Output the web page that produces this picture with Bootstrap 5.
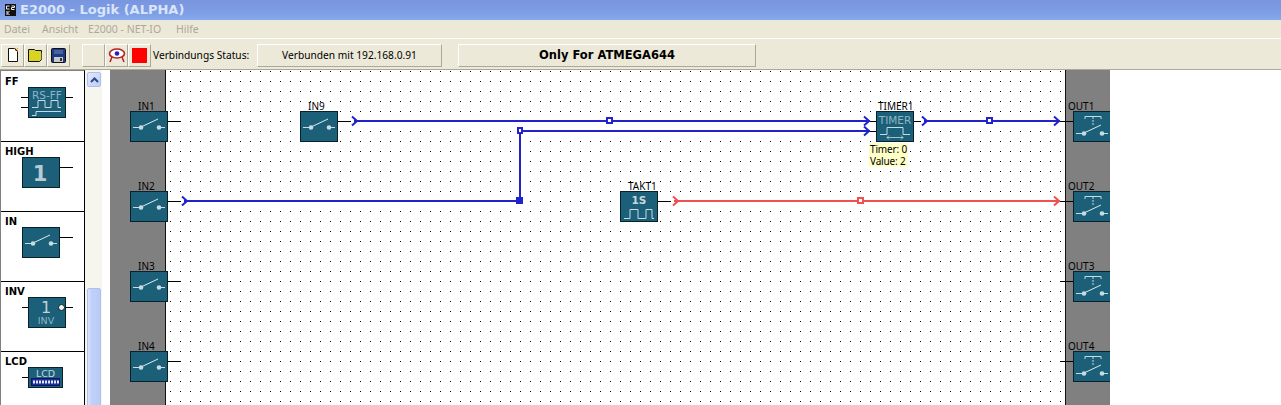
<!DOCTYPE html>
<html lang="de">
<head>
<meta charset="utf-8">
<title>E2000 - Logik (ALPHA)</title>
<link href="https://cdn.jsdelivr.net/npm/bootstrap@5.3.0/dist/css/bootstrap.min.css" rel="stylesheet">
<style>
html,body{height:405px;overflow:hidden;background:#fff}
body{font-family:"Noto Sans","DejaVu Sans",sans-serif;font-size:10.2px;color:#000;line-height:12px}
.win-title{height:20px;padding-left:5px;gap:4px;background:linear-gradient(#7a95df,#7d9de4 60%,#86a9ec);color:#d9e5fa;font-weight:700;font-size:13px;font-family:"DejaVu Sans",sans-serif}
.win-menu{height:19px;background:#ece9d8;padding-left:4px;color:#aca899;font-size:10.5px;border-bottom:1px solid #fff}
.mi-a{width:38px}.mi-b{width:46px}.mi-c{width:88px}
.win-tools{height:31px;background:#ece9d8;padding:5px 0 3px 1px;border-bottom:1px solid #aca899}
.tool{width:23px;height:23px;padding:0;border-radius:0;background:#ece9d8;border:1px solid;border-color:#fff #aca899 #aca899 #fff;display:flex;align-items:center;justify-content:center;--bs-btn-hover-bg:#ece9d8}
.tool-gap{margin-left:12px}
.status-lbl{margin:0 7px 0 2px;width:97px;white-space:nowrap}
.status-box{height:23px;border:1px solid;border-color:#fff #aca899 #aca899 #fff;justify-content:center;white-space:nowrap}
.status-a{width:185px;margin-right:16px}
.status-b{width:298px;font-weight:700;font-size:11.5px;font-family:"DejaVu Sans",sans-serif}
.work{height:335px}
.palette{width:85px;flex:none;border-left:1px solid #808080;border-top:1px solid #808080;border-right:1px solid #000;padding-top:1px;overflow:hidden}
.pal-item{height:70px;border-bottom:1px solid #000;background:#fff}
.pal-name{display:block;height:15px;padding:4px 0 0 4px;font-weight:700;font-size:10px;line-height:11px;font-family:"DejaVu Sans",sans-serif}
.pal-item svg{display:block}
.scroll-rail{width:17px;flex:none;background:#f6f5ee;padding:2px 1px 0 2px}
.scroll-up{height:15px;background:linear-gradient(135deg,#e2e9fd,#bccdf6);border:1px solid #aebff0;border-radius:2px}
.scroll-thumb{margin-top:201px;height:120px;background:linear-gradient(90deg,#dbe4fc,#c0d0f9 30%,#b9cbf7);border:1px solid #aebff0;border-radius:2px}
.sheet-gap{width:8px;flex:none}
.sheet{position:relative;width:1000px;height:335px;flex:none;overflow:hidden}
.rail-l{width:56px;background:#808080;border-right:1px solid #111}
.rail-m{flex:1;background:#fff}
.rail-r{width:45px;background:#808080;border-left:1px solid #111}
.wires{position:absolute;left:0;top:0}
.blk{position:absolute;width:38px;height:31px}
.blk svg{display:block}
.blk-name{position:absolute;bottom:31px;white-space:nowrap;line-height:10px;font-size:10px}
.name-in{left:8px}
.name-out{left:-5px}
.name-mid{left:2px}
.tip{position:absolute;left:759px;top:73px;width:39px;height:24px;background:#ffffc8;padding-left:1px;white-space:nowrap;line-height:12px;font-size:10px;letter-spacing:-.15px}
.nodetext{fill:#8fb6c4;font-family:"DejaVu Sans",sans-serif}
</style>
</head>
<body>
<svg width="0" height="0" class="position-absolute">
<defs>
<symbol id="sw-in" viewBox="0 0 38 31">
<rect x=".5" y=".5" width="37" height="30" fill="#1b5f79" stroke="#07222c"/>
<path d="M3 16.500h7M29 16.500h6" stroke="#c9dbe2"/>
<path d="M11 16l17-8" stroke="#dfeaee"/>
<circle cx="11" cy="16.500" r="2.300" fill="#c9dbe2"/><circle cx="29" cy="16.500" r="2.300" fill="#c9dbe2"/>
</symbol>
<symbol id="sw-out" viewBox="0 0 38 31">
<rect x=".5" y=".5" width="37" height="30" fill="#1b5f79" stroke="#07222c"/>
<path d="M12 8V5.500h16V8" fill="none" stroke="#c9dbe2"/>
<path d="M20 6v9" stroke="#c9dbe2" stroke-dasharray="2 1"/>
<path d="M3 22.500h7M29 22.500h6" stroke="#c9dbe2"/>
<path d="M11 22l17-8" stroke="#dfeaee"/>
<circle cx="11" cy="22.500" r="2.300" fill="#c9dbe2"/><circle cx="29" cy="22.500" r="2.300" fill="#c9dbe2"/>
</symbol>
<symbol id="timer" viewBox="0 0 38 31">
<rect x=".5" y=".5" width="37" height="30" fill="#1b5f79" stroke="#07222c"/>
<text x="19" y="13" text-anchor="middle" font-size="10.500" class="nodetext">TIMER</text>
<path d="M4 23.500h7V16.500h16V23.500h7" fill="none" stroke="#c9dbe2"/>
<path d="M11 26.500h16M13 24.500l-2 2 2 2M25 24.500l2 2-2 2" fill="none" stroke="#c9dbe2" stroke-width=".8"/>
</symbol>
<symbol id="takt" viewBox="0 0 38 31">
<rect x=".5" y=".5" width="37" height="30" fill="#1b5f79" stroke="#07222c"/>
<text x="19" y="13" text-anchor="middle" font-size="10.500" font-weight="700" fill="#c6d7de" font-family="DejaVu Sans,sans-serif">1S</text>
<path d="M4 27.500h6V18.500h8V27.500h8V18.500h6V27.500h2" fill="none" stroke="#c9dbe2"/>
</symbol>
</defs>
</svg>

<div class="d-flex align-items-center win-title">
<svg width="11" height="12" viewBox="0 0 11 12" aria-hidden="true"><rect width="11" height="12" fill="#111"/><path d="M1.500 2h3M1.500 2v3h3M6.500 2h3v1.500h-3v2h3M2 7v4M4.500 7l-2 2 2 2" fill="none" stroke="#eee" stroke-width="1"/></svg>
<span>E2000 - Logik (ALPHA)</span>
</div>

<div class="d-flex align-items-center win-menu">
<span class="mi-a">Datei</span><span class="mi-b">Ansicht</span><span class="mi-c">E2000 - NET-IO</span><span>Hilfe</span>
</div>

<div class="d-flex align-items-center win-tools">
<button class="btn tool" type="button" aria-label="Neu"><svg width="14" height="16" viewBox="0 0 14 16"><path d="M2.500 1.500h6l3 3v10h-9z" fill="#fff" stroke="#111"/><path d="M9 1l3 3M12 1l-3 3" stroke="#e8902a"/></svg></button>
<button class="btn tool" type="button" aria-label="Öffnen"><svg width="17" height="15" viewBox="0 0 17 15"><path d="M1.500 1.500h6l1 1h6v9l-2 2h-11z" fill="#d9d321" stroke="#111"/><path d="M14.500 4.500v7" stroke="#555"/></svg></button>
<button class="btn tool" type="button" aria-label="Speichern"><svg width="15" height="15" viewBox="0 0 15 15"><rect x=".5" y=".5" width="14" height="14" rx="1" fill="#1d3b7e" stroke="#111"/><path d="M3 3h9M3 5h9" stroke="#6f8bc9"/><rect x="3" y="9" width="9" height="5" fill="#c9c9c9"/><rect x="9" y="10" width="2" height="3" fill="#333"/></svg></button>
<button class="btn tool tool-gap" type="button" aria-label="Leer"></button>
<button class="btn tool" type="button" aria-label="Ansicht"><svg width="18" height="16" viewBox="0 0 18 16"><ellipse cx="9" cy="6.500" rx="7.500" ry="4.500" fill="#fff" stroke="#b52020" stroke-width="1.600"/><circle cx="9" cy="6.500" r="2.300" fill="#2020c8"/><path d="M4 10l-2 5M14 10l2 5" stroke="#b52020" stroke-width="1.500"/></svg></button>
<button class="btn tool" type="button" aria-label="Stopp"><svg width="15" height="15" viewBox="0 0 15 15"><rect width="15" height="15" fill="#f00"/></svg></button>
<span class="status-lbl">Verbindungs Status:</span>
<div class="d-flex align-items-center status-box status-a">Verbunden mit 192.168.0.91</div>
<div class="d-flex align-items-center status-box status-b">Only For ATMEGA644</div>
</div>

<div class="d-flex work">
<div class="palette">
<div class="pal-item"><span class="pal-name">FF</span>
<svg width="84" height="40" viewBox="0 0 84 40"><path d="M20 10.500h7M20 20.500h7M65 10.500h7" stroke="#000"/><rect x="27.500" y=".5" width="37" height="30" fill="#1b5f79" stroke="#07222c"/><text x="46" y="12" text-anchor="middle" font-size="10.500" class="nodetext">RS-FF</text><path d="M31 20.500h6v-7h7v7h6v-7h7v7h3" fill="none" stroke="#c9dbe2"/><path d="M31 28.500h4v-4h25" fill="none" stroke="#c9dbe2"/></svg></div>
<div class="pal-item"><span class="pal-name">HIGH</span>
<svg width="84" height="40" viewBox="0 0 84 40"><path d="M59 10.500h13" stroke="#000"/><rect x="21.500" y=".5" width="37" height="30" fill="#1b5f79" stroke="#07222c"/><text x="39" y="24" text-anchor="middle" font-size="21" font-weight="700" fill="#b8cbd3" font-family="DejaVu Sans,sans-serif">1</text></svg></div>
<div class="pal-item"><span class="pal-name">IN</span>
<svg width="84" height="40" viewBox="0 0 84 40"><path d="M59 10.500h13" stroke="#000"/><use href="#sw-in" x="21" y="0" width="38" height="31"/></svg></div>
<div class="pal-item"><span class="pal-name">INV</span>
<svg width="84" height="40" viewBox="0 0 84 40"><path d="M21 10.500h6M65 10.500h7" stroke="#000"/><rect x="27.500" y=".5" width="37" height="30" fill="#1b5f79" stroke="#07222c"/><text x="45" y="16" text-anchor="middle" font-size="16" fill="#c0d3da" font-family="DejaVu Sans,sans-serif">1</text><text x="45" y="27" text-anchor="middle" font-size="9.500" class="nodetext">INV</text><circle cx="60.500" cy="10.500" r="3" fill="#f2f2f2" stroke="#07222c"/></svg></div>
<div class="pal-item"><span class="pal-name">LCD</span>
<svg width="84" height="40" viewBox="0 0 84 40"><path d="M21 10.500h6" stroke="#000"/><rect x="27.500" y=".5" width="34" height="20" fill="#1b5f79" stroke="#07222c"/><text x="44.500" y="10" text-anchor="middle" font-size="9.500" fill="#c6d7de" font-family="DejaVu Sans,sans-serif">LCD</text><rect x="30.500" y="11.500" width="28" height="7" fill="#1c2f96" stroke="#0b1560"/><path d="M32 15h26" stroke="#dfe4ff" stroke-width="3" stroke-dasharray="2 1"/></svg></div>
</div>
<div class="scroll-rail">
<div class="scroll-up d-flex align-items-center justify-content-center"><svg width="9" height="6" viewBox="0 0 9 6"><path d="M1 5l3.500-3.500L8 5" fill="none" stroke="#2b4a86" stroke-width="2"/></svg></div>
<div class="scroll-thumb"></div>
</div>
<div class="sheet-gap"></div>
<div class="sheet">
<div class="d-flex h-100"><div class="rail-l"></div><div class="rail-m"></div><div class="rail-r"></div></div>
<svg class="wires" width="1000" height="335" viewBox="0 0 1000 335">
<defs><pattern id="dots" width="10" height="10" patternUnits="userSpaceOnUse"><rect x="0" y="1" width="1" height="1" fill="#000"/></pattern></defs>
<rect x="56" y="0" width="899" height="335" fill="url(#dots)"/>
<g stroke="#000" fill="none">
<path d="M58 51.500h13M58 131.500h13M58 211.500h13M58 291.500h13"/>
<path d="M228 51.500h13M548 131.500h13M804 51.500h7M760 51.500h6M760 61.500h6"/>
<path d="M950 51.500h13M950 131.500h13M950 211.500h13M950 291.500h13"/>
</g>
<g stroke="#2222cc" stroke-width="2" fill="none">
<path d="M244 51h516M410 61h350M410 61v70M74 131h336M814 51h136"/>
<path d="M242 46.500l5 4.500-5 4.500M754 46.500l5 4.500-5 4.500M754 56.500l5 4.500-5 4.500M812 46.500l5 4.500-5 4.500M944 46.500l5 4.500-5 4.500M72 126.500l5 4.500-5 4.500"/>
<rect x="497" y="48" width="5" height="5" fill="#fff"/>
<rect x="408" y="58" width="4" height="5" fill="#fff"/>
<rect x="407" y="128" width="5" height="5" fill="#2222cc"/>
<rect x="877" y="48" width="5" height="5" fill="#fff"/>
</g>
<g stroke="#f05050" stroke-width="2" fill="none">
<path d="M564 131h386"/>
<path d="M563 126.500l5 4.500-5 4.500M944 126.500l5 4.500-5 4.500"/>
<rect x="748" y="128" width="5" height="5" fill="#fff"/>
</g>
</svg>
<div class="blk" style="left:20px;top:41px"><span class="blk-name name-in">IN1</span><svg width="38" height="31"><use href="#sw-in"/></svg></div>
<div class="blk" style="left:20px;top:121px"><span class="blk-name name-in">IN2</span><svg width="38" height="31"><use href="#sw-in"/></svg></div>
<div class="blk" style="left:20px;top:201px"><span class="blk-name name-in">IN3</span><svg width="38" height="31"><use href="#sw-in"/></svg></div>
<div class="blk" style="left:20px;top:281px"><span class="blk-name name-in">IN4</span><svg width="38" height="31"><use href="#sw-in"/></svg></div>
<div class="blk" style="left:190px;top:41px"><span class="blk-name name-in">IN9</span><svg width="38" height="31"><use href="#sw-in"/></svg></div>
<div class="blk" style="left:510px;top:121px"><span class="blk-name name-in">TAKT1</span><svg width="38" height="31"><use href="#takt"/></svg></div>
<div class="blk" style="left:766px;top:41px"><span class="blk-name name-mid">TIMER1</span><svg width="38" height="31"><use href="#timer"/></svg></div>
<div class="tip">Timer: 0<br>Value: 2</div>
<div class="blk" style="left:963px;top:41px"><span class="blk-name name-out">OUT1</span><svg width="38" height="31"><use href="#sw-out"/></svg></div>
<div class="blk" style="left:963px;top:121px"><span class="blk-name name-out">OUT2</span><svg width="38" height="31"><use href="#sw-out"/></svg></div>
<div class="blk" style="left:963px;top:201px"><span class="blk-name name-out">OUT3</span><svg width="38" height="31"><use href="#sw-out"/></svg></div>
<div class="blk" style="left:963px;top:281px"><span class="blk-name name-out">OUT4</span><svg width="38" height="31"><use href="#sw-out"/></svg></div>
</div>
</div>
<script src="https://cdn.jsdelivr.net/npm/bootstrap@5.3.0/dist/js/bootstrap.bundle.min.js"></script>
</body>
</html>
